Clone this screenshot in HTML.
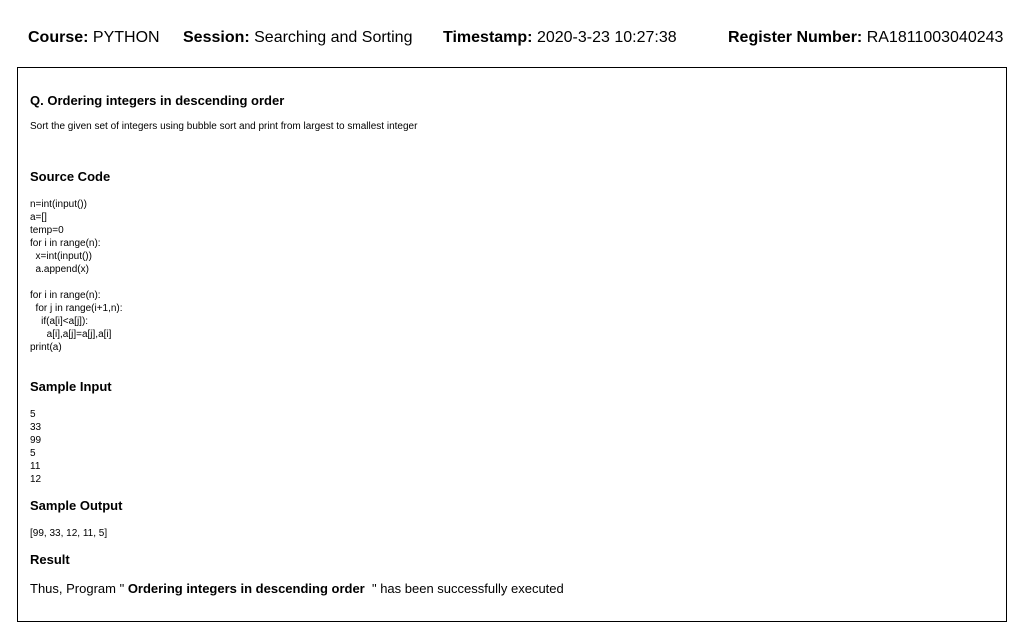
<!DOCTYPE html>
<html><head><meta charset="utf-8"><style>
body{margin:0;width:1024px;height:630px;background:#fff;font-family:"Liberation Sans",Arial,sans-serif;color:#000;position:relative;overflow:hidden}
.a{position:absolute;white-space:pre}
.h{font-size:16px;line-height:20px;top:28px}
.box{position:absolute;left:17px;top:67px;width:988px;height:553px;border:1px solid #000}
.t{font-size:13px;font-weight:bold;line-height:16px;left:30px}
.s{font-size:10px;line-height:13px;left:30px}
</style></head><body>
<div class="a h" style="left:28px"><b>Course:</b> PYTHON</div>
<div class="a h" style="left:183px"><b>Session:</b> Searching and Sorting</div>
<div class="a h" style="left:443px"><b>Timestamp:</b> 2020-3-23 10:27:38</div>
<div class="a h" style="left:728px"><b>Register Number:</b> RA1811003040243</div>
<div class="box"></div>
<div class="a t" style="top:93px">Q. Ordering integers in descending order</div>
<div class="a s" style="top:120px">Sort the given set of integers using bubble sort and print from largest to smallest integer</div>
<div class="a t" style="top:169px">Source Code</div>
<div class="a s" style="top:198px">n=int(input())
a=[]
temp=0
for i in range(n):
  x=int(input())
  a.append(x)

for i in range(n):
  for j in range(i+1,n):
    if(a[i]&lt;a[j]):
      a[i],a[j]=a[j],a[i]
print(a)</div>
<div class="a t" style="top:379px">Sample Input</div>
<div class="a s" style="top:408px">5
33
99
5
11
12</div>
<div class="a t" style="top:498px">Sample Output</div>
<div class="a s" style="top:527px">[99, 33, 12, 11, 5]</div>
<div class="a t" style="top:552px">Result</div>
<div class="a" style="left:30px;top:581px;font-size:13px;line-height:16px">Thus, Program " <b>Ordering integers in descending order</b>  " has been successfully executed</div>
</body></html>
